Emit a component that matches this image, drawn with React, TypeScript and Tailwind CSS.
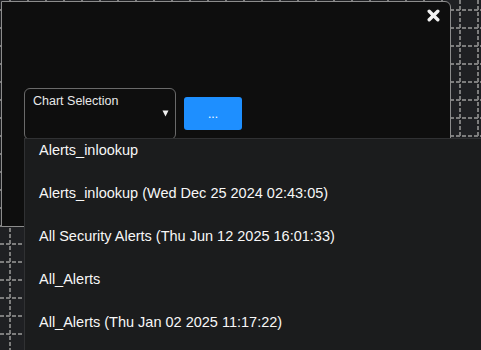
import React from 'react';

const items = [
  'Alerts_inlookup',
  'Alerts_inlookup (Wed Dec 25 2024 02:43:05)',
  'All Security Alerts (Thu Jun 12 2025 16:01:33)',
  'All_Alerts',
  'All_Alerts (Thu Jan 02 2025 11:17:22)',
];

const GridBackdrop = () => (
  <svg className="absolute inset-0" width="481" height="350">
    <defs>
      <pattern id="grid" width="18" height="18" patternUnits="userSpaceOnUse">
        <path d="M10 0 V18" stroke="#7d7d7d" strokeWidth="2" strokeDasharray="4 2" />
        <path d="M0 10 H18" stroke="#7d7d7d" strokeWidth="2" strokeDasharray="4 2" />
      </pattern>
    </defs>
    <rect width="481" height="350" fill="url(#grid)" />
  </svg>
);

export default function App() {
  return (
    <div className="relative h-[350px] w-[481px] overflow-hidden bg-[#1f2023] font-['Liberation_Sans',Arial,sans-serif]">
      <GridBackdrop />

      {/* Modal */}
      <div className="relative ml-px mt-px h-[226px] w-[450px] rounded-tr-md border border-[#8c8c8c] bg-[#0e0e0e]">
        <button className="absolute right-[10px] top-[7px] flex h-[13px] w-[13px] items-center justify-center">
          <svg width="13" height="13" viewBox="0 0 13 13">
            <path d="M2.2 2.2 L10.8 10.8 M10.8 2.2 L2.2 10.8" stroke="#f2f2f2" strokeWidth="3.4" strokeLinecap="round" />
          </svg>
        </button>

        <div className="flex items-start gap-2 pl-[22px] pt-[86px]">
          <div className="relative h-[52px] w-[152px] rounded-md border border-[#6a6a6a] px-2 pt-[4px]">
            <div className="text-[12.5px] leading-[16px] text-[#e8e8e8]">Chart Selection</div>
            <svg className="absolute left-[137px] top-[21px]" width="7" height="7" viewBox="0 0 7 7">
              <path d="M0.5 0.5 H6.5 L3.5 6.5 Z" fill="#f0f0f0" />
            </svg>
          </div>
          <button className="mt-[9px] flex h-[33px] w-[58px] items-center justify-center rounded-[3px] bg-[#1e8fff] text-[12px] leading-none text-white">
            ...
          </button>
        </div>

        {/* Dropdown list */}
        <div className="absolute left-[22px] top-[136px] h-[220px] w-[470px] overflow-hidden border-l border-t border-[#303133] bg-[#1b1c1d]">
          <ul className="-mt-[10px]">
            {items.map((item, i) => (
              <li key={i} className="h-[43px] pl-[14px] text-[14.5px] leading-[43px] text-[#f7f7f7]">
                {item}
              </li>
            ))}
          </ul>
        </div>
      </div>
    </div>
  );
}
